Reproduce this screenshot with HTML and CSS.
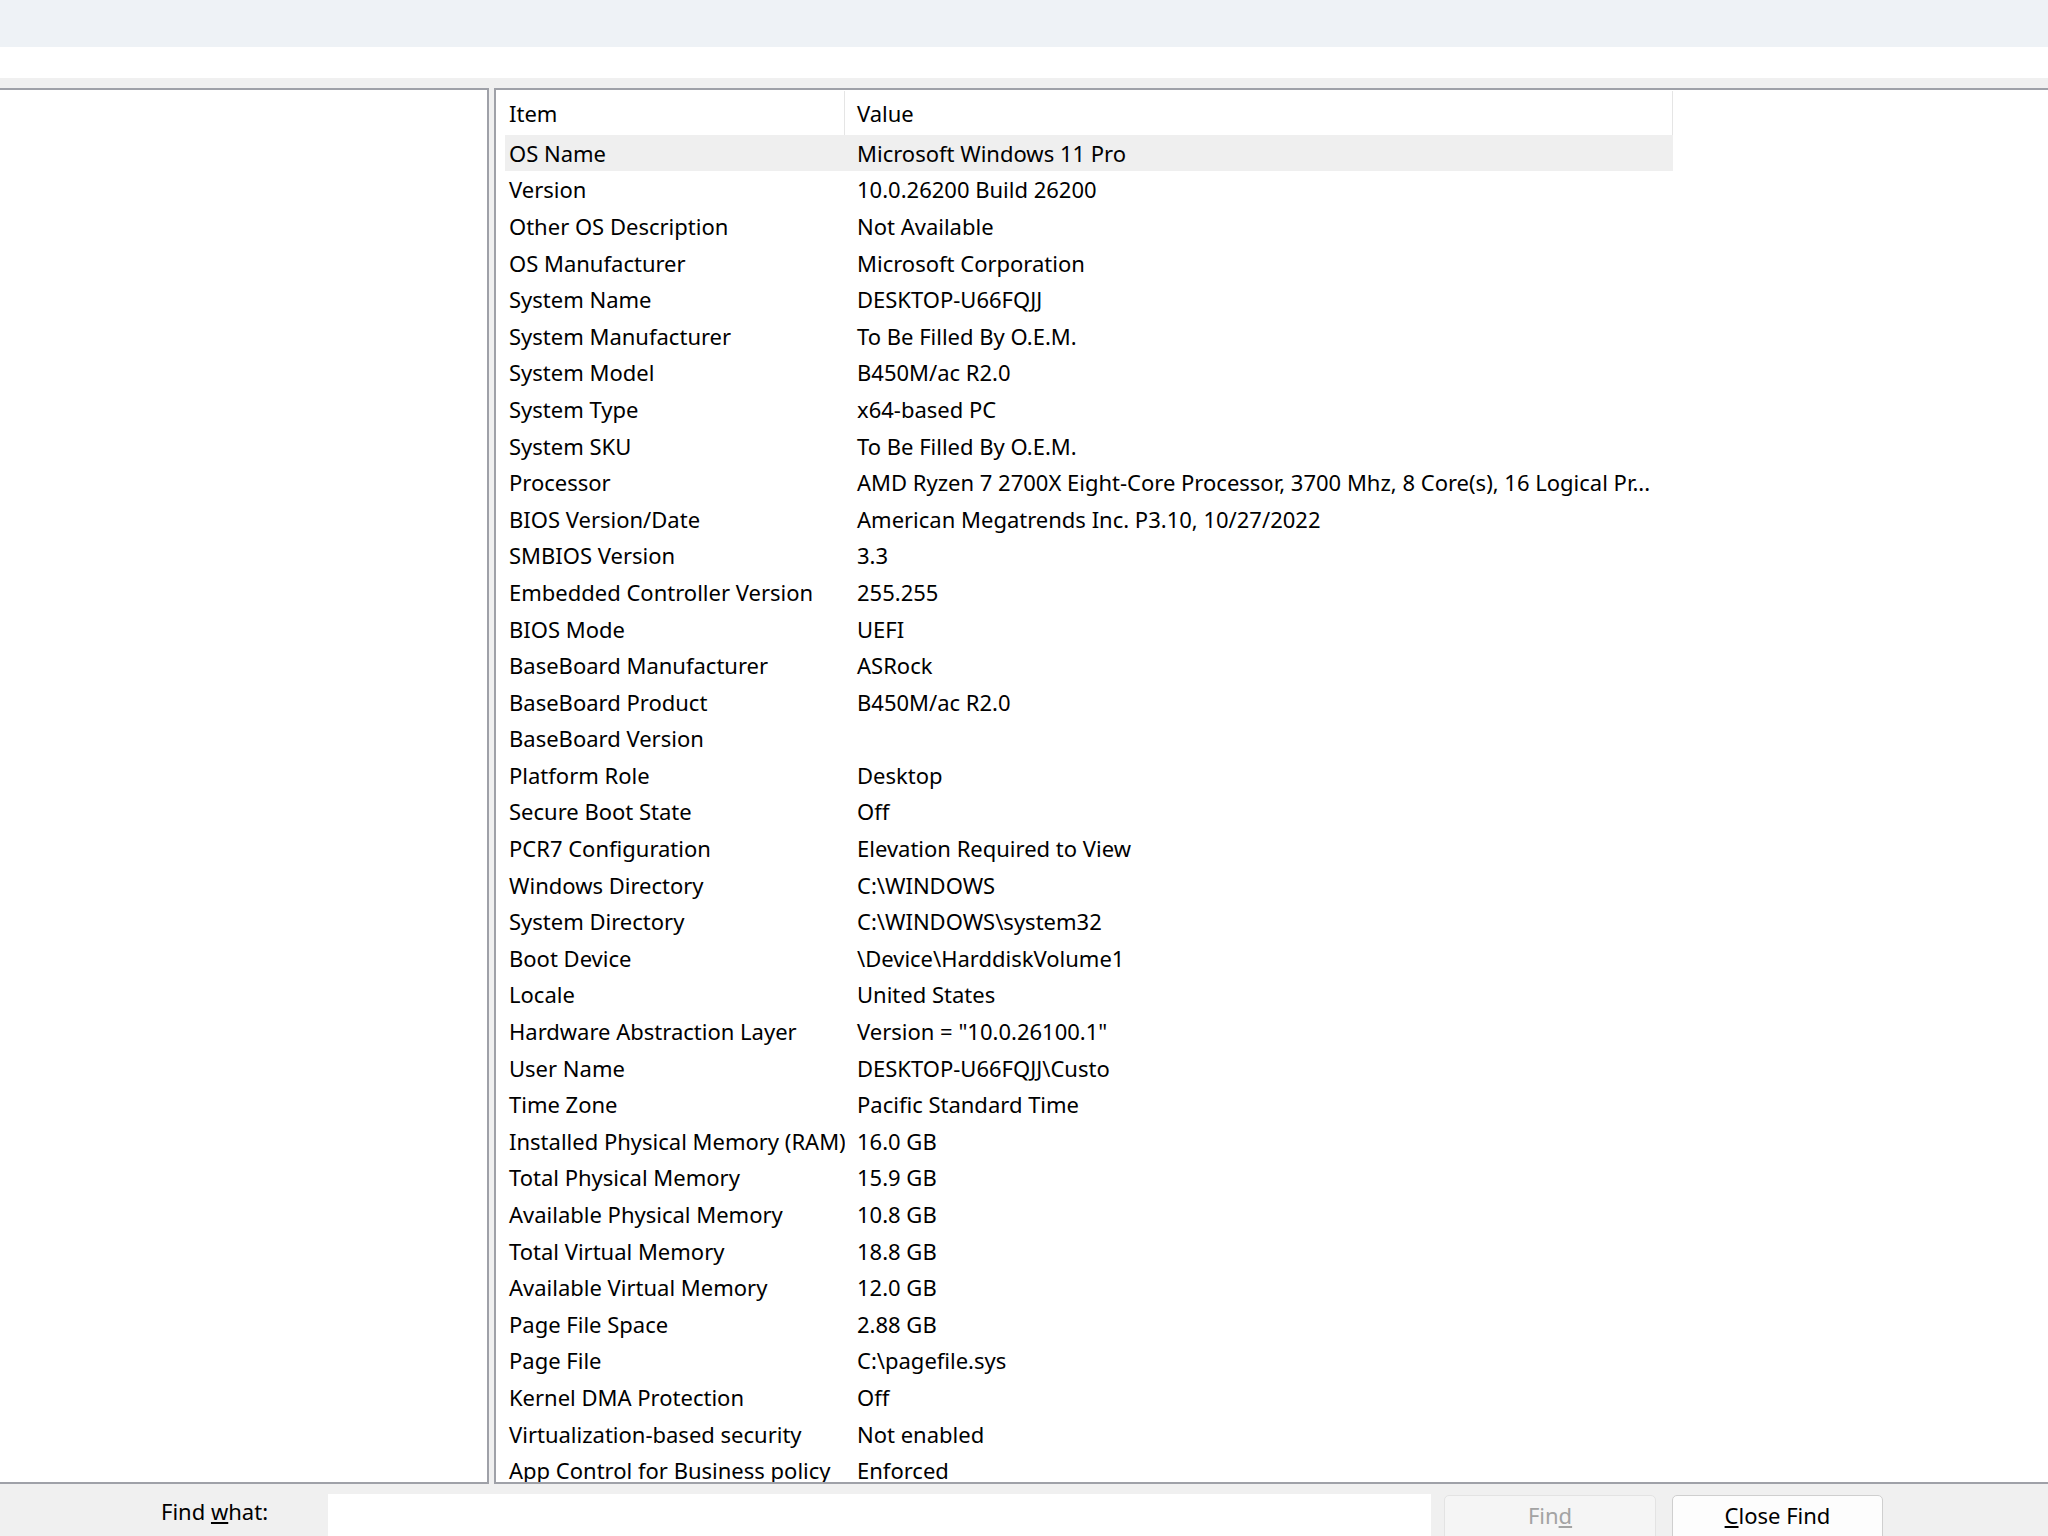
FILE: index.html
```html
<!DOCTYPE html>
<html>
  <head>
    <meta charset="UTF-8" />
    <title>System Information</title>
    <link rel="stylesheet" href="styles.css">
  </head>
  <body>
    <div class="titlebar"></div>
    <div class="menubar"></div>

    <div class="main">
      <!-- category tree (empty) -->
      <div class="tree"></div>

      <!-- details list -->
      <div class="list">
        <div class="list-head">
          <div class="col-item">Item</div>
          <div class="col-value">Value</div>
        </div>
        <div class="row hot"><div class="col-item">OS Name</div><div class="col-value">Microsoft Windows 11 Pro</div></div>
        <div class="row"><div class="col-item">Version</div><div class="col-value">10.0.26200 Build 26200</div></div>
        <div class="row"><div class="col-item">Other OS Description</div><div class="col-value">Not Available</div></div>
        <div class="row"><div class="col-item">OS Manufacturer</div><div class="col-value">Microsoft Corporation</div></div>
        <div class="row"><div class="col-item">System Name</div><div class="col-value">DESKTOP-U66FQJJ</div></div>
        <div class="row"><div class="col-item">System Manufacturer</div><div class="col-value">To Be Filled By O.E.M.</div></div>
        <div class="row"><div class="col-item">System Model</div><div class="col-value">B450M/ac R2.0</div></div>
        <div class="row"><div class="col-item">System Type</div><div class="col-value">x64-based PC</div></div>
        <div class="row"><div class="col-item">System SKU</div><div class="col-value">To Be Filled By O.E.M.</div></div>
        <div class="row"><div class="col-item">Processor</div><div class="col-value">AMD Ryzen 7 2700X Eight-Core Processor, 3700 Mhz, 8 Core(s), 16 Logical Pr...</div></div>
        <div class="row"><div class="col-item">BIOS Version/Date</div><div class="col-value">American Megatrends Inc. P3.10, 10/27/2022</div></div>
        <div class="row"><div class="col-item">SMBIOS Version</div><div class="col-value">3.3</div></div>
        <div class="row"><div class="col-item">Embedded Controller Version</div><div class="col-value">255.255</div></div>
        <div class="row"><div class="col-item">BIOS Mode</div><div class="col-value">UEFI</div></div>
        <div class="row"><div class="col-item">BaseBoard Manufacturer</div><div class="col-value">ASRock</div></div>
        <div class="row"><div class="col-item">BaseBoard Product</div><div class="col-value">B450M/ac R2.0</div></div>
        <div class="row"><div class="col-item">BaseBoard Version</div><div class="col-value"></div></div>
        <div class="row"><div class="col-item">Platform Role</div><div class="col-value">Desktop</div></div>
        <div class="row"><div class="col-item">Secure Boot State</div><div class="col-value">Off</div></div>
        <div class="row"><div class="col-item">PCR7 Configuration</div><div class="col-value">Elevation Required to View</div></div>
        <div class="row"><div class="col-item">Windows Directory</div><div class="col-value">C:\WINDOWS</div></div>
        <div class="row"><div class="col-item">System Directory</div><div class="col-value">C:\WINDOWS\system32</div></div>
        <div class="row"><div class="col-item">Boot Device</div><div class="col-value">\Device\HarddiskVolume1</div></div>
        <div class="row"><div class="col-item">Locale</div><div class="col-value">United States</div></div>
        <div class="row"><div class="col-item">Hardware Abstraction Layer</div><div class="col-value">Version = "10.0.26100.1"</div></div>
        <div class="row"><div class="col-item">User Name</div><div class="col-value">DESKTOP-U66FQJJ\Custo</div></div>
        <div class="row"><div class="col-item">Time Zone</div><div class="col-value">Pacific Standard Time</div></div>
        <div class="row"><div class="col-item">Installed Physical Memory (RAM)</div><div class="col-value">16.0 GB</div></div>
        <div class="row"><div class="col-item">Total Physical Memory</div><div class="col-value">15.9 GB</div></div>
        <div class="row"><div class="col-item">Available Physical Memory</div><div class="col-value">10.8 GB</div></div>
        <div class="row"><div class="col-item">Total Virtual Memory</div><div class="col-value">18.8 GB</div></div>
        <div class="row"><div class="col-item">Available Virtual Memory</div><div class="col-value">12.0 GB</div></div>
        <div class="row"><div class="col-item">Page File Space</div><div class="col-value">2.88 GB</div></div>
        <div class="row"><div class="col-item">Page File</div><div class="col-value">C:\pagefile.sys</div></div>
        <div class="row"><div class="col-item">Kernel DMA Protection</div><div class="col-value">Off</div></div>
        <div class="row"><div class="col-item">Virtualization-based security</div><div class="col-value">Not enabled</div></div>
        <div class="row"><div class="col-item">App Control for Business policy</div><div class="col-value">Enforced</div></div>
      </div>
    </div>

    <!-- find bar -->
    <div class="findbar">
      <label class="find-label" for="findWhat">Find <u>w</u>hat:</label>
      <input type="text" id="findWhat" class="find-input" />
      <button class="btn" disabled>Fin<u>d</u></button>
      <button class="btn btn-close"><u>C</u>lose Find</button>
    </div>
  </body>
</html>
```

FILE: styles.css
```css
body {
  margin: 0;
  width: 2048px;
  height: 1536px;
  overflow: hidden;
  font-family: "Noto Sans", "Open Sans", sans-serif;
  font-size: 22px;
  color: #000000;
  background-color: #f0f0f0;
}
.titlebar {
  height: 47px;
  background-color: #eef2f6;
}
.menubar {
  height: 31px;
  background-color: #ffffff;
}
.main {
  display: flex;
  gap: 5px;
  height: 1396px;
  margin-top: 10px;
}
.tree {
  width: 487px;
  background-color: #ffffff;
  border: 2px solid #9fa1a8;
  border-left: none;
}
.list {
  flex: 1;
  overflow: hidden;
  background-color: #ffffff;
  border: 2px solid #9fa1a8;
  border-right: none;
  padding: 1px 0 0 9px;
}
.list-head,
.row {
  display: grid;
  grid-template-columns: 340px 828px;
  width: 1168px;
  align-items: center;
  white-space: nowrap;
}
.list-head {
  height: 43.5px;
}
.list-head .col-item,
.list-head .col-value {
  height: 100%;
  display: flex;
  align-items: center;
  border-right: 1px solid #e5e5e5;
  box-sizing: border-box;
}
.row {
  height: 36.6px;
}
.row.hot {
  background-color: #efefef;
}
.col-item {
  padding-left: 4px;
  overflow: hidden;
}
.col-value {
  padding-left: 12px;
  overflow: hidden;
}
.findbar {
  display: flex;
  align-items: flex-start;
  height: 52px;
  padding-top: 10px;
  box-sizing: border-box;
  overflow: hidden;
}
.find-label {
  width: 328px;
  padding-left: 161px;
  box-sizing: border-box;
  line-height: 44px;
  margin-top: -5px;
}
.find-input {
  width: 1103px;
  height: 46px;
  margin: 0 13px 0 0;
  border: none;
  background-color: #ffffff;
  box-sizing: border-box;
}
.btn {
  width: 212px;
  height: 46px;
  margin-top: 1px;
  font-family: inherit;
  font-size: 22px;
  border: 1px solid #e3e3e3;
  border-radius: 5px;
  background-color: #f5f5f5;
  color: #a3a3a3;
  padding: 0 0 6px 0;
}
.btn-close {
  width: 211px;
  margin-left: 16px;
  border-color: #cfcfcf;
  background-color: #fdfdfd;
  color: #000000;
}
```
